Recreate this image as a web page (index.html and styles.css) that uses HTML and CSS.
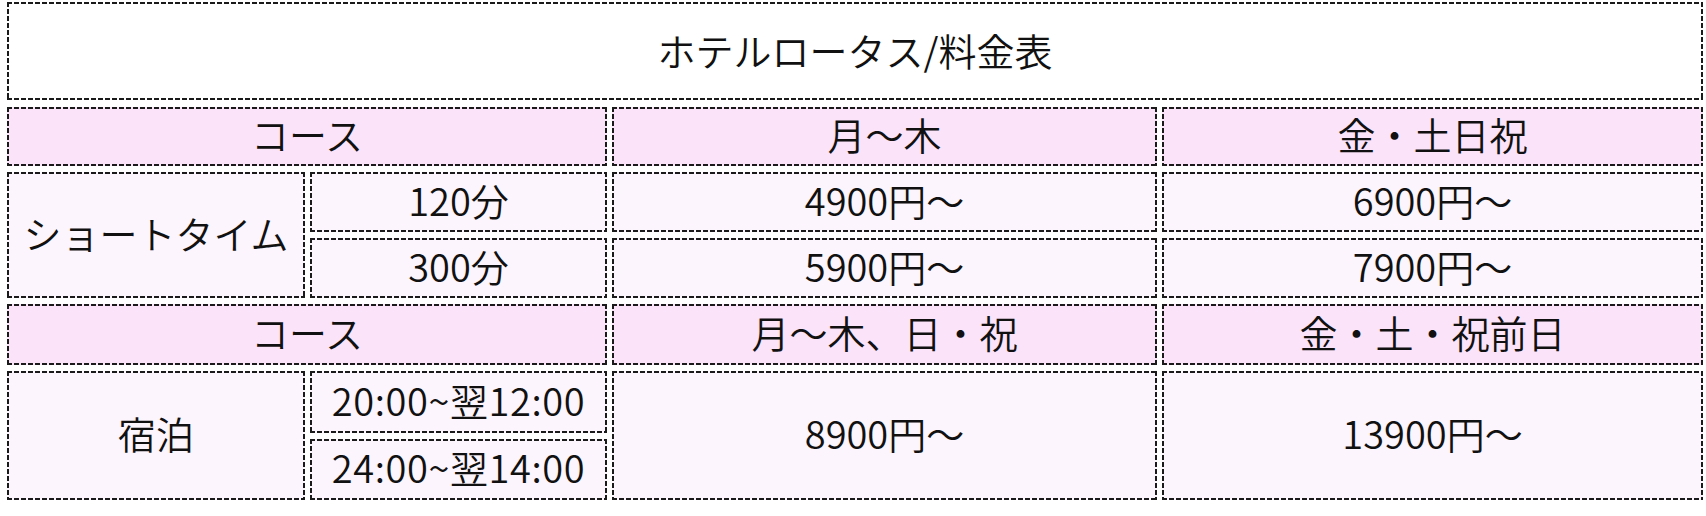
FILE: index.html
```html
<!DOCTYPE html>
<html lang="ja">
<head>
<meta charset="utf-8">
<title>ホテルロータス/料金表</title>
<link rel="stylesheet" href="styles.css">
</head>
<body>
<div class="page">
  <div class="title dashed">ホテルロータス/料金表</div>
  <div class="price-grid">
    <div class="cell dashed head span-col">コース</div>
    <div class="cell dashed head">月〜木</div>
    <div class="cell dashed head">金・土日祝</div>

    <div class="cell dashed body span-row">ショートタイム</div>
    <div class="cell dashed body">120分</div>
    <div class="cell dashed body">4900円〜</div>
    <div class="cell dashed body">6900円〜</div>
    <div class="cell dashed body">300分</div>
    <div class="cell dashed body">5900円〜</div>
    <div class="cell dashed body">7900円〜</div>

    <div class="cell dashed head span-col">コース</div>
    <div class="cell dashed head">月〜木、日・祝</div>
    <div class="cell dashed head">金・土・祝前日</div>

    <div class="cell dashed body span-row">宿泊</div>
    <div class="cell dashed body time">20:00~翌12:00</div>
    <div class="cell dashed body span-row">8900円〜</div>
    <div class="cell dashed body span-row">13900円〜</div>
    <div class="cell dashed body time">24:00~翌14:00</div>
  </div>
</div>
</body>
</html>
```
FILE: styles.css
```css
html, body {
  margin: 0;
  padding: 0;
  background: #ffffff;
}

body {
  font-family: "Noto Sans CJK JP", "Noto Sans", sans-serif;
  font-weight: 350;
  color: #111111;
}

.page {
  padding: 2px 0 0 7px;
  width: 1696px;
}

.dashed {
  --fill: #ffffff;
  --dash: #1a1a1a;
  background:
    repeating-linear-gradient(90deg, var(--dash) 0 5px, transparent 5px 7px) left top / 100% 2px no-repeat,
    repeating-linear-gradient(90deg, var(--dash) 0 5px, transparent 5px 7px) left bottom / 100% 2px no-repeat,
    repeating-linear-gradient(180deg, var(--dash) 0 5px, transparent 5px 7px) left top / 2px 100% no-repeat,
    repeating-linear-gradient(180deg, var(--dash) 0 5px, transparent 5px 7px) right top / 2px 100% no-repeat,
    var(--fill);
}

.title {
  box-sizing: border-box;
  height: 98px;
  display: flex;
  align-items: center;
  justify-content: center;
  font-size: 38px;
  line-height: 1;
  margin-bottom: 7px;
  padding-bottom: 2px;
}

.price-grid {
  display: grid;
  grid-template-columns: 298px 297px 545px 541px;
  grid-template-rows: 59px 60px 60px 61px 62px 61px;
  column-gap: 5px;
  row-gap: 6px;
}

.cell {
  box-sizing: border-box;
  display: flex;
  align-items: center;
  justify-content: center;
  font-size: 38px;
  line-height: 1;
  white-space: nowrap;
  padding-bottom: 5px;
}

.time {
  letter-spacing: 0.6px;
}

.head {
  --fill: #fbe3fa;
}

.body {
  --fill: #fdf5fd;
}

.span-col {
  grid-column: span 2;
}

.span-row {
  grid-row: span 2;
}
```
